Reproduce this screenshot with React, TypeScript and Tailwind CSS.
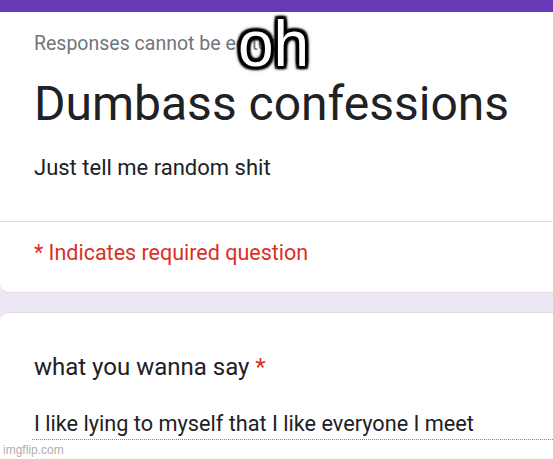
import React from "react";

export default function App() {
  return (
    <div className="relative w-[553px] h-[459px] overflow-hidden bg-[#ede7f6]" style={{ fontFamily: "Roboto, 'Liberation Sans', sans-serif" }}>
      <div className="h-[12px] bg-[#673ab7]" />
      <div className="bg-white h-[281px] rounded-bl-[9px] border-b border-[#dadce0] flex flex-col">
        <div className="pl-[34px] pt-[20px] text-[19.5px] text-[#70757a] leading-[24px] whitespace-nowrap">Responses cannot be edited</div>
        <div className="pl-[34px] mt-[20px] text-[48px] text-[#202124] leading-[56px] whitespace-nowrap">Dumbass confessions</div>
        <div className="pl-[34px] mt-[22px] text-[22px] text-[#202124] leading-[28px]">Just tell me random shit</div>
        <div className="mt-[39px] border-t border-[#dadce0]" />
        <div className="pl-[34px] mt-[17px] text-[21.5px] text-[#d93025] leading-[28px]">* Indicates required question</div>
      </div>
      <div className="mt-[19px] bg-white h-[200px] rounded-tl-[9px] border-t border-[#dadce0] flex flex-col">
        <div className="pl-[34px] mt-[39px] text-[24px] text-[#202124] leading-[30px]">
          what you wanna say <span className="text-[#d93025]">*</span>
        </div>
        <div className="pl-[34px] mt-[28px] text-[21.7px] text-[#202124] leading-[28px] whitespace-nowrap">I like lying to myself that I like everyone I meet</div>
        <div className="ml-[32px] mt-[1px] border-b border-dotted border-[#80868b]" />
      </div>
      <div className="absolute left-[3px] top-[442px] text-[12px] text-[#b0b0b0] leading-[16px]" style={{ fontFamily: "'Liberation Sans', Arial, sans-serif" }}>imgflip.com</div>
      <div
        className="absolute left-[238px] top-[8px] text-[64px] leading-[72px] text-white font-normal"
        style={{
          fontFamily: "'Liberation Sans', Arial, sans-serif",
          textShadow:
            "3px 3px 2px #000, -3px -3px 2px #000, 3px -3px 2px #000, -3px 3px 2px #000, 0 3px 2px #000, 0 -3px 2px #000, 3px 0 2px #000, -3px 0 2px #000, 0 0 6px #000",
        }}
      >
        oh
      </div>
    </div>
  );
}
